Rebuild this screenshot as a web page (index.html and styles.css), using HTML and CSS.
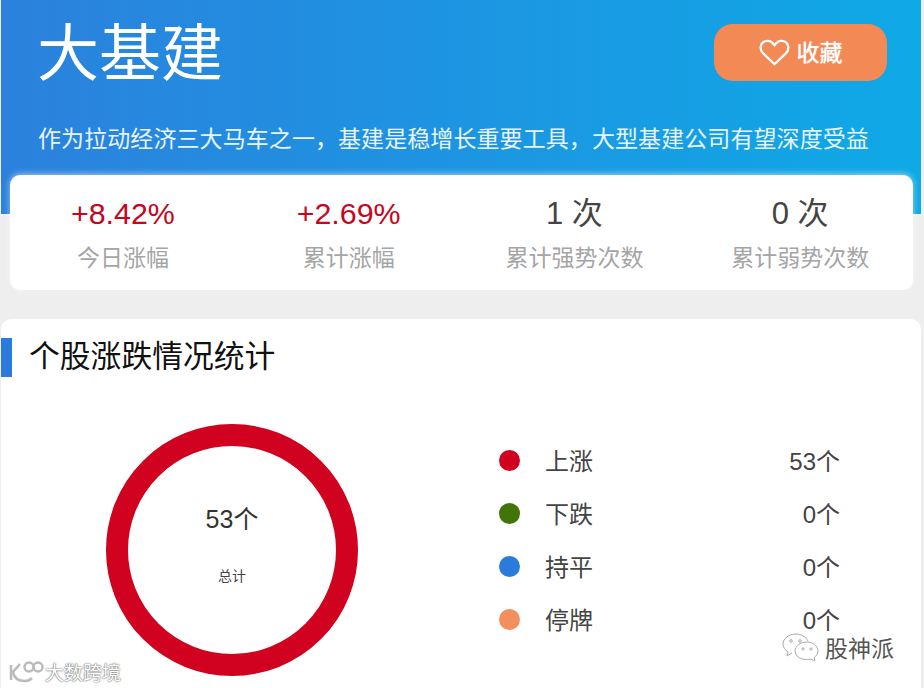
FILE: index.html
```html
<!DOCTYPE html>
<html lang="zh-CN">
  <head>
    <meta charset="UTF-8" />
    <meta name="viewport" content="width=device-width, initial-scale=1.0" />
    <title>大基建</title>
    <link rel="stylesheet" href="styles.css">
  </head>
  <body>
    <main>
      <header class="hero">
        <div class="hero-top">
          <h1>大基建</h1>
          <button class="fav">
            <svg class="fav-icon" viewBox="0 0 32 28" aria-hidden="true">
              <path d="M16 26.2 4 14.6C.6 11.2.9 6.4 4 3.6c3-2.6 7.6-2.2 10.2.8L16 6.4l1.8-2c2.6-3 7.2-3.4 10.2-.8 3.1 2.8 3.4 7.6 0 11z" />
            </svg>
            <span>收藏</span>
          </button>
        </div>
        <p class="hero-desc">作为拉动经济三大马车之一，基建是稳增长重要工具，大型基建公司有望深度受益</p>
      </header>

      <section class="stats">
        <div class="stat">
          <strong class="is-up">+8.42%</strong>
          <span>今日涨幅</span>
        </div>
        <div class="stat">
          <strong class="is-up">+2.69%</strong>
          <span>累计涨幅</span>
        </div>
        <div class="stat">
          <strong>1 次</strong>
          <span>累计强势次数</span>
        </div>
        <div class="stat">
          <strong>0 次</strong>
          <span>累计弱势次数</span>
        </div>
      </section>

      <section class="panel">
        <h2>个股涨跌情况统计</h2>
        <div class="panel-body">
          <div class="donut">
            <b>53个</b>
            <small>总计</small>
          </div>
          <ul class="legend">
            <li><i class="dot is-red"></i><span>上涨</span><em>53个</em></li>
            <li><i class="dot is-green"></i><span>下跌</span><em>0个</em></li>
            <li><i class="dot is-blue"></i><span>持平</span><em>0个</em></li>
            <li><i class="dot is-orange"></i><span>停牌</span><em>0个</em></li>
          </ul>
        </div>
      </section>
    </main>

    <!-- watermarks sit over the screenshot -->
    <div class="mark-left">
      <svg viewBox="0 0 36 24" aria-hidden="true">
        <path d="M3 5v15M12 4 5 12c1 6 5 9 12 9 3 0 5-1 7-3" />
        <circle cx="21" cy="7" r="4.5" />
        <circle cx="30" cy="7" r="4.5" />
      </svg>
      <span>大数跨境</span>
    </div>
    <div class="mark-right">
      <svg viewBox="0 0 38 30" aria-hidden="true">
        <path d="M14 2C7 2 1 6.500 1 12c0 3 2 6 5 8l-1 4 5-3M26 9c-2-4-7-7-12-7" />
        <path d="M25 10c6 0 11 4 11 9 0 3-2 5-4 7l1 3-4-2c-5 1-15 1-16-8 0-5 6-9 12-9z" />
        <circle cx="9" cy="9" r="1.300" />
        <circle cx="18" cy="9" r="1.300" />
        <circle cx="21" cy="17" r="1.100" />
        <circle cx="29" cy="17" r="1.100" />
      </svg>
      <span>股神派</span>
    </div>
  </body>
</html>
```

FILE: styles.css
```css
*,
*::before,
*::after {
  box-sizing: border-box;
  margin: 0;
  padding: 0;
}

html,
body {
  height: 100%;
}

body {
  font-family: 'Liberation Sans', 'Noto Sans CJK SC', sans-serif;
  background: #eeeeee;
  overflow: hidden;
  position: relative;
}

main {
  width: 920px;
  margin-left: 1px;
}

.hero {
  height: 214px;
  padding: 12px 34px 0 37px;
  background: linear-gradient(90deg, #2b81dd 0%, #0fa9e6 100%);
  color: #fff;
}

.hero-top {
  display: flex;
  justify-content: space-between;
  align-items: flex-start;
  height: 112px;
}

.hero-top h1 {
  margin-left: -1px;
  font-size: 62px;
  line-height: 86px;
  font-weight: 400;
}

.fav {
  display: flex;
  align-items: center;
  justify-content: center;
  gap: 7px;
  width: 173px;
  height: 57px;
  margin-top: 12px;
  border: 0;
  border-radius: 19px;
  background: #f38a55;
  color: #fff;
  font: inherit;
  font-size: 23px;
}

.fav span {
  margin-bottom: 4px;
  text-shadow: 0 0 1px #fff;
}

.fav-icon {
  width: 31px;
  height: 27px;
  fill: none;
  stroke: #fff;
  stroke-width: 2.4;
}

.hero-desc {
  font-size: 23px;
  letter-spacing: 0.08px;
  line-height: 30px;
  white-space: nowrap;
  color: #e8f4fc;
}

.stats {
  display: grid;
  grid-template-columns: repeat(4, 1fr);
  width: 903px;
  height: 115px;
  margin: -39px 0 0 9px;
  background: #fff;
  border-radius: 10px;
  box-shadow: 0 -1px 6px rgba(255, 255, 255, 0.55);
  position: relative;
}

.stat {
  display: flex;
  flex-direction: column;
  align-items: center;
  padding-top: 20px;
}

.stat strong {
  height: 36px;
  padding-top: 1px;
  font-size: 31px;
  line-height: 36px;
  font-weight: 400;
  color: #444;
}

.stat strong.is-up {
  padding-top: 0;
  font-size: 30.4px;
  color: #c5061f;
}

.stat span {
  margin-top: 11px;
  font-size: 23px;
  line-height: 32px;
  color: #a5a5a5;
}

.panel {
  height: 400px;
  margin-top: 29px;
  padding-top: 19px;
  background: #fff;
  border-radius: 10px 10px 0 0;
}

.panel h2 {
  height: 39px;
  padding-left: 17px;
  border-left: 11px solid #2b7bdc;
  font-size: 30.8px;
  line-height: 38px;
  font-weight: 400;
  color: #111;
}

.panel-body {
  display: flex;
  align-items: flex-start;
  padding: 47px 0 0 105px;
}

.donut {
  display: flex;
  flex-direction: column;
  align-items: center;
  width: 252px;
  height: 252px;
  padding-top: 57px;
  border: 22px solid #d0021f;
  border-radius: 50%;
}

.donut b {
  font-size: 25px;
  line-height: 32px;
  font-weight: 400;
  color: #333;
}

.donut small {
  margin-top: 32px;
  font-size: 14px;
  line-height: 18px;
  color: #444;
}

.legend {
  list-style: none;
  width: 341px;
  margin: 9px 0 0 141px;
}

.legend li {
  display: flex;
  align-items: center;
  height: 53px;
  font-size: 24px;
  color: #444;
}

.dot {
  width: 21px;
  height: 21px;
  margin: 1px 25px 0 0;
  border-radius: 50%;
}

.dot.is-red {
  background: #d0021f;
}

.dot.is-green {
  background: #417505;
}

.dot.is-blue {
  background: #2b7bdc;
}

.dot.is-orange {
  background: #f38f5c;
}

.legend em {
  margin-left: auto;
  font-style: normal;
}

.mark-left,
.mark-right {
  position: absolute;
  display: flex;
  align-items: center;
}

.mark-left {
  left: 8px;
  top: 658px;
  gap: 1px;
  font-size: 19px;
  color: #fff;
  text-shadow: 0 0 2px #666, 0 0 1px #666;
}

.mark-left svg {
  width: 36px;
  height: 24px;
  fill: none;
  stroke: #bbb;
  stroke-width: 2.5;
}

.mark-right {
  left: 782px;
  top: 630px;
  gap: 5px;
  font-size: 23px;
  color: #555;
}

.mark-right svg {
  width: 38px;
  height: 30px;
  fill: #fff;
  stroke: #aaa;
  stroke-width: 1;
}
```
